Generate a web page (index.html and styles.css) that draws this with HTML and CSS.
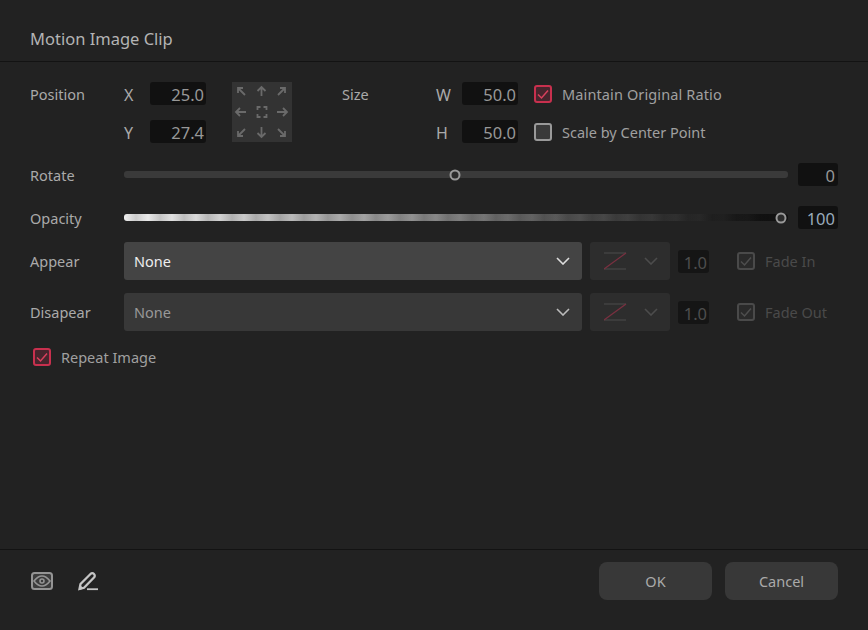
FILE: index.html
```html
<!DOCTYPE html>
<html lang="en">
<head>
    <meta charset="UTF-8">
    <title>Motion Image Clip</title>
    <link rel="stylesheet" href="styles.css">
</head>
<body>
    <svg class="defs" width="0" height="0">
        <symbol id="chev" viewBox="0 0 14 8"><path d="M1 1l6 6 6-6" fill="none" stroke="currentColor" stroke-width="1.6"/></symbol>
        <symbol id="tick" viewBox="0 0 18 18"><path d="M4 9.500l3.500 3.500L14 5.500" fill="none" stroke="currentColor" stroke-width="1.500"/></symbol>
        <symbol id="zig" viewBox="0 0 24 18"><path d="M0 1h22M0 17h22" fill="none" stroke="#4c4c4c" stroke-width="1.2"/><path d="M22 1L0 17" fill="none" stroke="#7a3040" stroke-width="1.2"/></symbol>
    </svg>
    <div class="dialog">
        <h1 class="title">Motion Image Clip</h1>
        <div class="content">
            <div class="transform">
                <span class="label">Position</span>
                <span class="axis">X</span>
                <span class="num">25.0</span>
                <svg class="pad" width="60" height="60" viewBox="0 0 60 60">
                    <g fill="none" stroke="#6a6a6a" stroke-width="1.8">
                        <path d="M6 6l7 7M6 11V6h5"/>
                        <path d="M29.500 14V5M25.500 9l4-4 4 4"/>
                        <path d="M53 6l-7 7M48 6h5v5"/>
                        <path d="M4 30h10M8 26l-4 4 4 4"/>
                        <path d="M45 30h10M51 26l4 4-4 4"/>
                        <path d="M13 47l-7 7M6 49v5h5"/>
                        <path d="M29.500 45v10M25.500 51l4 4 4-4"/>
                        <path d="M46 47l7 7M53 49v5h-5"/>
                        <path d="M25.500 28v-3h3M31.500 25h3v3M34.500 32v3h-3M28.500 35h-3v-3"/>
                    </g>
                </svg>
                <span class="label size-label">Size</span>
                <span class="axis">W</span>
                <span class="num">50.0</span>
                <label class="check ratio"><span class="box on"><svg width="18" height="18"><use href="#tick"/></svg></span><span class="text">Maintain Original Ratio</span></label>
                <span class="axis row2">Y</span>
                <span class="num row2-num">27.4</span>
                <span class="axis row2b">H</span>
                <span class="num row2b-num">50.0</span>
                <label class="check scale"><span class="box"></span><span class="text">Scale by Center Point</span></label>
            </div>

            <div class="row rotate">
                <span class="label">Rotate</span>
                <div class="track">
                    <span class="thumb" style="left: 49.85%"></span>
                </div>
                <span class="num wide">0</span>
            </div>

            <div class="row opacity">
                <span class="label">Opacity</span>
                <div class="track fade">
                    <span class="thumb" style="left: 98.9%"></span>
                </div>
                <span class="num wide blue">100</span>
            </div>

            <div class="row effect appear">
                <span class="label">Appear</span>
                <div class="select active">None<svg width="14" height="8"><use href="#chev"/></svg></div>
                <div class="curve"><svg width="24" height="18"><use href="#zig"/></svg><svg class="dim-chev" width="14" height="8"><use href="#chev"/></svg></div>
                <span class="num small">1.0</span>
                <label class="check off"><span class="box dim"><svg width="18" height="18"><use href="#tick"/></svg></span>Fade In</label>
            </div>

            <div class="row effect disappear">
                <span class="label">Disapear</span>
                <div class="select">None<svg width="14" height="8"><use href="#chev"/></svg></div>
                <div class="curve"><svg width="24" height="18"><use href="#zig"/></svg><svg class="dim-chev" width="14" height="8"><use href="#chev"/></svg></div>
                <span class="num small">1.0</span>
                <label class="check off"><span class="box dim"><svg width="18" height="18"><use href="#tick"/></svg></span>Fade Out</label>
            </div>

            <label class="check repeat"><span class="box on"><svg width="18" height="18"><use href="#tick"/></svg></span>Repeat Image</label>
        </div>

        <div class="footer">
            <svg class="icon" width="22" height="18" viewBox="0 0 22 18">
                <rect x="1" y="1" width="20" height="16" rx="2.500" fill="#3c3c3c" stroke="#949494" stroke-width="2"/>
                <path d="M3 9C6 5.200 8.400 4 11 4S16 5.200 19 9C16 12.800 13.600 14 11 14S6 12.800 3 9z" fill="none" stroke="#949494" stroke-width="1.600"/>
                <circle cx="11" cy="9" r="2" fill="none" stroke="#949494" stroke-width="1.600"/>
            </svg>
            <svg class="icon pencil" width="20" height="20" viewBox="0 0 20 20">
                <path d="M1.500 18l1-5L12.500 3c1-1 2.500-1 3.500 0s1 2.500 0 3.500L6 16.800z" fill="none" stroke="#c4c4c4" stroke-width="2.300"/>
                <path d="M1 19l1-5 4 3.500z" fill="#c4c4c4"/>
                <path d="M9 18.200h11" fill="none" stroke="#c4c4c4" stroke-width="1.800"/>
            </svg>
            <div class="spacer"></div>
            <button class="btn" type="button">OK</button>
            <button class="btn" type="button">Cancel</button>
        </div>
    </div>
</body>
</html>
```

FILE: styles.css
```css
html, body {
    margin: 0;
    background-color: #222;
}

.defs {
    display: block;
    height: 0;
}

.dialog {
    width: 868px;
    height: 630px;
    display: flex;
    flex-direction: column;
    font-family: "Noto Sans", "Noto Sans CJK KR", sans-serif;
    font-size: 14.5px;
    color: #aaa;
    background-color: #222;
}

.title {
    margin: 0;
    height: 61px;
    padding-left: 30px;
    line-height: 77px;
    font-size: 16.5px;
    font-weight: 400;
    color: #b4b4b4;
    border-bottom: 1px solid #131313;
}

.content {
    flex: 1;
    padding: 20px 30px 0;
}

.label {
    width: 94px;
    flex: none;
}

.axis {
    font-size: 16px;
    padding-top: 2px;
}

.num {
    display: block;
    height: 23px;
    line-height: 26px;
    padding-right: 2px;
    box-sizing: border-box;
    text-align: right;
    font-size: 16.5px;
    background-color: #111;
    border-radius: 3px;
    color: #989898;
}

.transform {
    display: grid;
    grid-template-columns: 94px 26px 56px 26px 60px 50px 94px 26px 56px 16px auto;
    grid-template-rows: 23px 23px;
    row-gap: 15px;
    align-items: center;
}

.transform .num { grid-row: 1; }
.transform .label { grid-row: 1; }
.transform .axis { grid-row: 1; }

.transform > :nth-child(1) { grid-column: 1; }
.transform > :nth-child(2) { grid-column: 2; }
.transform > :nth-child(3) { grid-column: 3; }
.transform > :nth-child(5) { grid-column: 7; }
.transform > :nth-child(6) { grid-column: 8; }
.transform > :nth-child(7) { grid-column: 9; }

.pad {
    grid-column: 5;
    grid-row: 1 / span 2;
    align-self: start;
    background-color: #333;
}

.ratio {
    grid-column: 11;
    grid-row: 1;
}

.ratio .text { letter-spacing: 0.12px; }

.transform .row2 { grid-column: 2; grid-row: 2; }
.transform .row2-num { grid-column: 3; grid-row: 2; }
.transform .row2b { grid-column: 8; grid-row: 2; }
.transform .row2b-num { grid-column: 9; grid-row: 2; }

.scale {
    grid-column: 11;
    grid-row: 2;
}

.row {
    display: flex;
    align-items: center;
}

.rotate { margin-top: 20px; height: 23px; }
.opacity { margin-top: 20px; height: 23px; }
.effect { height: 38px; }
.appear { margin-top: 13px; }
.disappear { margin-top: 13px; }

.track {
    position: relative;
    flex: 1;
    height: 7px;
    margin-right: 10px;
    border-radius: 3px;
    background-color: #3a3a3a;
}

.fade {
    background:
        repeating-linear-gradient(90deg, rgba(0, 0, 0, 0) 0, rgba(0, 0, 0, 0.14) 12px, rgba(0, 0, 0, 0) 24px),
        linear-gradient(90deg, #f0f0f0 0, #9a9a9a 40%, #4c4c4c 70%, #111 97%);
}

.thumb {
    position: absolute;
    top: 50%;
    width: 11px;
    height: 11px;
    box-sizing: border-box;
    transform: translate(-50%, -50%);
    border: 2px solid #999;
    border-radius: 50%;
    background-color: #2c2c2c;
}

.wide {
    width: 40px;
    flex: none;
    padding-right: 3px;
}

.blue { color: #9ab; }

.select {
    width: 458px;
    height: 38px;
    flex: none;
    box-sizing: border-box;
    display: flex;
    align-items: center;
    justify-content: space-between;
    padding: 0 12px 0 10px;
    border-radius: 3px;
    background-color: #383838;
    color: #999;
}

.select svg { color: #bbb; }

.select.active {
    background-color: #444;
    color: #eee;
}

.select.active svg { color: #ddd; }

.curve {
    width: 80px;
    height: 38px;
    flex: none;
    margin-left: 8px;
    box-sizing: border-box;
    display: flex;
    align-items: center;
    justify-content: space-between;
    padding: 0 12px 0 14px;
    border-radius: 3px;
    background-color: #2d2d2d;
}

.dim-chev { color: #4c4c4c; }

.small {
    width: 31px;
    flex: none;
    margin-left: 8px;
    padding-right: 2px;
    color: #4e4e4e;
    background-color: #151515;
}

.check {
    display: flex;
    align-items: center;
    gap: 10px;
    color: #a0a0a0;
}

.box {
    width: 18px;
    height: 18px;
    flex: none;
    box-sizing: border-box;
    border: 2px solid #9a9a9a;
    border-radius: 3px;
    background-color: #3a3a3a;
}

.box svg {
    display: block;
    margin: -2px;
}

.box.on {
    border-color: #c8304e;
    background-color: #46252d;
    color: #d8405c;
}

.box.dim {
    border-color: #4a4a4a;
    background-color: #2a2a2a;
    color: #4e4e4e;
}

.off {
    margin-left: 28px;
    color: #4a4a4a;
}

.repeat {
    margin: 16px 0 0 3px;
}

.footer {
    height: 81px;
    box-sizing: border-box;
    display: flex;
    align-items: center;
    padding: 0 30px 18px 31px;
    border-top: 1px solid #131313;
}

.pencil { margin-left: 25px; }

.spacer { flex: 1; }

.btn {
    width: 113px;
    height: 38px;
    margin-left: 13px;
    padding: 0;
    border: none;
    border-radius: 8px;
    background-color: #383838;
    color: #aaa;
    font-family: inherit;
    font-size: 14.5px;
}
```
